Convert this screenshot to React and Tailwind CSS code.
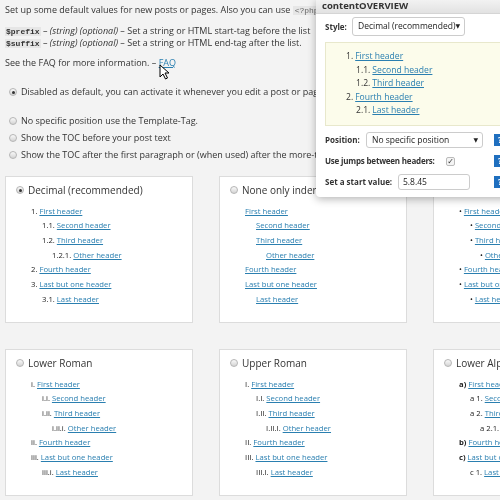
import React from 'react'

const FONT = { fontFamily: '"Open Sans", "DejaVu Sans", sans-serif' }

const decimal = [
  [1, '1.', 'First header'],
  [2, '1.1.', 'Second header'],
  [2, '1.2.', 'Third header'],
  [3, '1.2.1.', 'Other header'],
  [1, '2.', 'Fourth header'],
  [1, '3.', 'Last but one header'],
  [2, '3.1.', 'Last header'],
]
const none = decimal.map(([l, , t]) => [l, '', t])
const bullets = decimal.map(([l, , t]) => [l, '•', t])
const lowerRoman = [
  [1, 'i.', 'First header'],
  [2, 'i.i.', 'Second header'],
  [2, 'i.ii.', 'Third header'],
  [3, 'i.ii.i.', 'Other header'],
  [1, 'ii.', 'Fourth header'],
  [1, 'iii.', 'Last but one header'],
  [2, 'iii.i.', 'Last header'],
]
const upperRoman = [
  [1, 'I.', 'First header'],
  [2, 'I.I.', 'Second header'],
  [2, 'I.II.', 'Third header'],
  [3, 'I.II.I.', 'Other header'],
  [1, 'II.', 'Fourth header'],
  [1, 'III.', 'Last but one header'],
  [2, 'III.I.', 'Last header'],
]
const lowerAlpha = [
  [1, 'a)', 'First header'],
  [2, 'a 1.', 'Second header'],
  [2, 'a 2.', 'Third header'],
  [3, 'a 2.1.', 'Other header'],
  [1, 'b)', 'Fourth header'],
  [1, 'c)', 'Last but one header'],
  [2, 'c 1.', 'Last header'],
]

const indent = { 1: 'pl-[25px]', 2: 'pl-[36px]', 3: 'pl-[46px]' }

function Radio({ checked }) {
  return (
    <span className="w-[8px] h-[8px] rounded-full border border-[#b5b5b5] bg-gradient-to-b from-[#fafafa] to-[#d4d4d4] flex items-center justify-center shrink-0">
      {checked && <span className="w-[3px] h-[3px] rounded-full bg-[#333]" />}
    </span>
  )
}

function Num({ n, bold }) {
  if (!n) return null
  if (bold) return <span className="font-bold text-[#222]">{n}</span>
  return <span className="text-[#222]">{n}</span>
}

function Card({ title, items, checked, boldNum }) {
  return (
    <div className="bg-white border border-[#dcdcdc] h-[147px] pt-[6px]">
      <div className="flex items-center gap-[4px] pl-[10px] h-[14px] text-[10px] text-[#333]">
        <Radio checked={checked} />
        <span>{title}</span>
      </div>
      <div className="mt-[7px] flex flex-col">
        {items.map(([l, n, t], i) => (
          <div key={i} className={`${indent[l]} h-[14.7px] flex items-center gap-[2px] text-[7.7px] text-[#222] whitespace-nowrap`}>
            <Num n={n} bold={boldNum && l === 1} />
            <a className="text-[#2a7fb0] underline">{t}</a>
          </div>
        ))}
      </div>
    </div>
  )
}

function Cursor() {
  return (
    <svg className="absolute left-[159px] top-[64px]" width="12" height="16" viewBox="0 0 12 16">
      <path d="M1 1 L1 13 L4 10 L6.5 15 L8.5 14 L6 9 L10 9 Z" fill="#fff" stroke="#000" strokeWidth="1" strokeLinejoin="round" />
    </svg>
  )
}

function Help() {
  return (
    <span className="w-[12px] h-[12px] bg-[#1f6fbf] text-white text-[8px] font-bold flex items-center justify-center shrink-0">?</span>
  )
}

export default function App() {
  return (
    <div className="w-[500px] h-[500px] overflow-hidden relative bg-[#f3f3f3] text-[#333] antialiased opacity-[0.999] will-change-transform" style={FONT}>
      {/* intro text */}
      <div className="pl-[5px] pt-[4px] text-[9px] leading-[12px] whitespace-nowrap">
        <p>
          Set up some default values for new posts or pages. Also you can use{' '}
          <code className="bg-[#e6e6e6] text-[#666] px-[2px] font-['Liberation_Mono'] text-[8px]">&lt;?php</code>
        </p>
        <div className="mt-[8px] leading-[11px]">
          <p>
            <code className="bg-[#e6e6e6] font-bold font-['Liberation_Mono'] text-[8px] px-[1px]">$prefix</code> – <i>(string) (optional)</i> – Set a string or HTML start-tag before the list
          </p>
          <p>
            <code className="bg-[#e6e6e6] font-bold font-['Liberation_Mono'] text-[8px] px-[1px]">$suffix</code> – <i>(string) (optional)</i> – Set a string or HTML end-tag after the list.
          </p>
        </div>
        <p className="mt-[8px]">
          See the FAQ for more information. – <a className="text-[#2a7fb0] underline">FAQ</a>
        </p>
        <div className="mt-[17px] flex items-center gap-[4px] pl-[4px]">
          <Radio checked />
          <span>Disabled as default, you can activate it whenever you edit a post or page.</span>
        </div>
        <div className="mt-[17px] flex flex-col gap-[5px] pl-[4px]">
          <div className="flex items-center gap-[4px]"><Radio /><span>No specific position use the Template-Tag.</span></div>
          <div className="flex items-center gap-[4px]"><Radio /><span>Show the TOC before your post text</span></div>
          <div className="flex items-center gap-[4px]"><Radio /><span>Show the TOC after the first paragraph or (when used) after the more-tag</span></div>
        </div>
      </div>

      {/* style cards */}
      <div className="grid grid-cols-[188px_188px_188px] gap-x-[26px] gap-y-[26px] pl-[5px] mt-[15px]">
        <Card title="Decimal (recommended)" items={decimal} checked />
        <Card title="None only indent" items={none} />
        <Card title="Bullets" items={bullets} />
        <Card title="Lower Roman" items={lowerRoman} />
        <Card title="Upper Roman" items={upperRoman} />
        <Card title="Lower Alphabet" items={lowerAlpha} boldNum />
      </div>

      <Cursor />

      {/* contentOVERVIEW popup */}
      <div className="absolute left-[316px] top-0 w-[200px] h-[197px] bg-white rounded-b-[4px] shadow-[0_2px_8px_rgba(0,0,0,0.3)] text-[8.5px] whitespace-nowrap">
        <div className="h-[14px] bg-gradient-to-b from-[#f2f2f2] to-[#e2e2e2] border-b border-[#d5d5d5] pl-[6px] flex items-center font-bold text-[9.5px] text-[#333]">
          contentOVERVIEW
        </div>
        <div className="pl-[9px] pt-[3px]">
          <div className="flex items-center h-[19px]">
            <span className="font-bold w-[27px] text-[8px]">Style:</span>
            <div className="w-[113px] h-[19px] border border-[#ccc] rounded-[3px] flex items-center justify-between pl-[5px] pr-[4px] text-[#222]">
              <span>Decimal (recommended)</span>
              <span className="text-[6px]">▼</span>
            </div>
          </div>
          <div className="mt-[6px] h-[84px] bg-[#fcfceb] border border-[#e8e8cc] pt-[7px] text-[8.6px]">
            <div className="pl-[20px] h-[13.5px] flex items-center gap-[2px]"><span>1.</span><a className="text-[#2a7fb0] underline">First header</a></div>
            <div className="pl-[30px] h-[13.5px] flex items-center gap-[2px]"><span>1.1.</span><a className="text-[#2a7fb0] underline">Second header</a></div>
            <div className="pl-[30px] h-[13.5px] flex items-center gap-[2px]"><span>1.2.</span><a className="text-[#2a7fb0] underline">Third header</a></div>
            <div className="pl-[20px] h-[13.5px] flex items-center gap-[2px]"><span>2.</span><a className="text-[#2a7fb0] underline">Fourth header</a></div>
            <div className="pl-[30px] h-[13.5px] flex items-center gap-[2px]"><span>2.1.</span><a className="text-[#2a7fb0] underline">Last header</a></div>
          </div>
          <div className="mt-[6px] flex items-center h-[16px]">
            <span className="font-bold w-[41px] text-[8px]">Position:</span>
            <div className="w-[117px] h-[16px] border border-[#ccc] rounded-[3px] flex items-center justify-between pl-[5px] pr-[4px] text-[#222]">
              <span>No specific position</span>
              <span className="text-[6px]">▼</span>
            </div>
            <span className="ml-[11px]"><Help /></span>
          </div>
          <div className="mt-[5px] flex items-center h-[16px]">
            <span className="font-bold w-[121px] text-[8px] tracking-[-0.2px]">Use jumps between headers:</span>
            <span className="w-[9px] h-[9px] border border-[#bbb] rounded-[2px] bg-[#f4f4f4] flex items-center justify-center text-[8px] leading-none text-[#333]">✓</span>
            <span className="ml-[39px]"><Help /></span>
          </div>
          <div className="mt-[5px] flex items-center h-[16px]">
            <span className="font-bold w-[73px] text-[8px]">Set a start value:</span>
            <div className="w-[72px] h-[16px] border border-[#ccc] rounded-[3px] flex items-center px-[4px] text-[#222]">5.8.45</div>
            <span className="ml-[24px]"><Help /></span>
          </div>
        </div>
      </div>
    </div>
  )
}
